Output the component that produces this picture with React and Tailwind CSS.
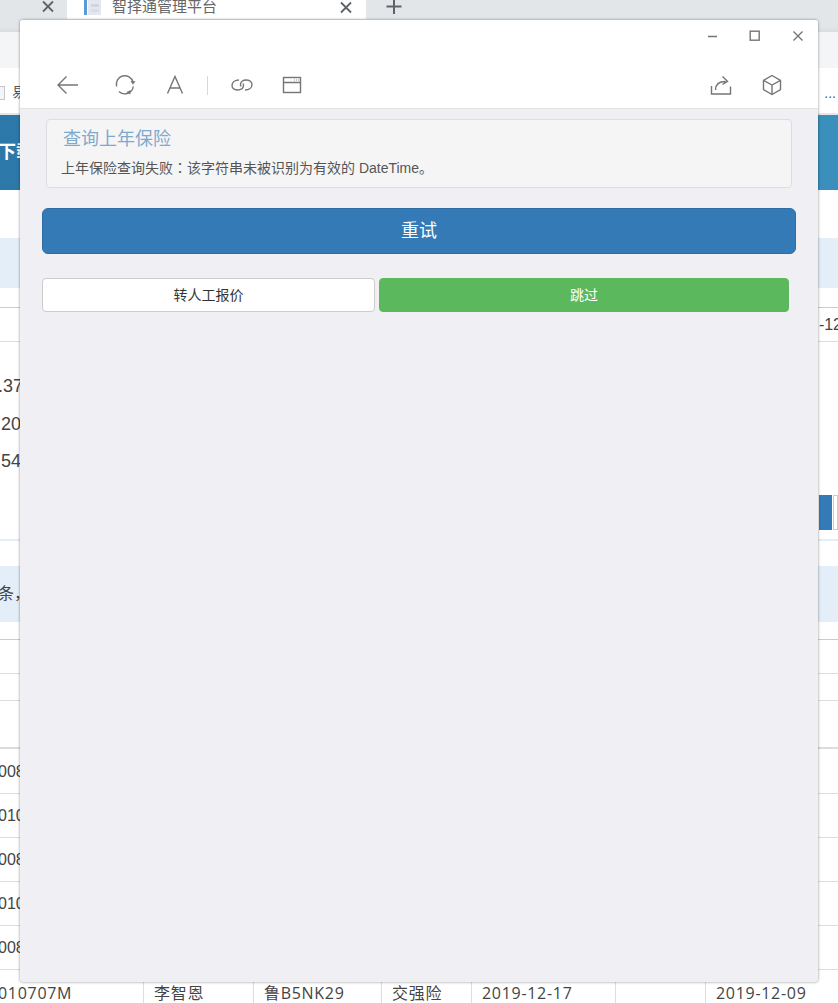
import React from "react";

const cjk = "font-['Liberation_Sans','Noto_Sans_CJK_SC',sans-serif]";
const tableFont = "font-['Open_Sans','Noto_Sans_CJK_SC',sans-serif]";
const strokeIcon = {
  fill: "none",
  stroke: "#757575",
  strokeWidth: 1.4,
};

const TableRow = ({ text, className = "h-11" }) => (
  <div className={`${className} flex items-center overflow-hidden border-b border-[#dddddd] bg-white pt-[1px] text-[16px] text-[#444444]`}>
    <span className="-ml-[2px]">{text}</span>
  </div>
);

const LastRow = () => (
  <div className={`${tableFont} grid h-[33px] grid-cols-[143px_110px_128px_90px_144px_90px_1fr] bg-white text-[16px] leading-[46px] tracking-[0.7px] text-[#444444]`}>
    <div className="-ml-[2px]">010707M</div>
    <div className="border-l border-[#dddddd] pl-[10px]">李智恩</div>
    <div className="border-l border-[#dddddd] pl-[10px]">鲁B5NK29</div>
    <div className="border-l border-[#dddddd] pl-[10px]">交强险</div>
    <div className="border-l border-[#dddddd] pl-[10px]">2019-12-17</div>
    <div className="border-l border-[#dddddd]"></div>
    <div className="border-l border-[#dddddd] pl-[10px]">2019-12-09</div>
  </div>
);

const Background = () => (
  <div className="flex h-[1003px] w-[838px] flex-col overflow-hidden bg-white">
    {/* browser tabs */}
    <div className="flex h-[32px] items-start bg-[#e3e6e9] shadow-[inset_0_-6px_6px_-6px_#cfd2d5]">
      <svg width="14" height="14" viewBox="0 0 14 14" className="ml-[41px]" fill="none" stroke="#5f6368" strokeWidth="1.8">
        <path d="M2 1.500 12 11.500M12 1.500 2 11.500" />
      </svg>
      <div className="ml-[12px] flex h-[19px] w-[299px] items-center bg-white text-[15px] text-[#666666]">
        <svg width="20" height="20" viewBox="0 0 20 20" className="ml-[16px] -mt-[2px]">
          <rect x="1" y="0" width="3" height="16" fill="#5b9bd5" />
          <rect x="5" y="0" width="13" height="16" fill="#e4e8ee" />
          <rect x="8" y="5" width="8" height="3" fill="#cfd6df" />
          <rect x="8" y="10" width="8" height="3" fill="#d9dee5" />
        </svg>
        <span className="ml-[9px] -mt-[5px]">智择通管理平台</span>
        <svg width="14" height="14" viewBox="0 0 14 14" className="ml-auto mr-[13px] -mt-[4px]" fill="none" stroke="#5f6368" strokeWidth="1.8">
          <path d="M2 1.500 12 11.500M12 1.500 2 11.500" />
        </svg>
      </div>
      <svg width="16" height="16" viewBox="0 0 16 16" className="ml-[20px] -mt-[1px]" fill="none" stroke="#5f6368" strokeWidth="2">
        <path d="M8 0v15M0.500 7.500h15" />
      </svg>
    </div>
    <div className="h-[36px] bg-[#f4f5f6]"></div>
    {/* bookmarks */}
    <div className="flex h-[45px] items-center bg-white text-[14px] text-[#555555]">
      <div className="mt-[4px] h-[14px] w-[5px] border border-l-0 border-[#c4c8cc] bg-[#f4f5f6]"></div>
      <span className="ml-[7px] mt-[3px]">易</span>
      <span className="ml-auto mr-[2px] mt-[6px] text-[#3a5fa8]">...</span>
    </div>
    <div className="h-[2px] bg-[#e6e6e6]"></div>
    {/* page header */}
    <div className="flex h-[75px] items-center bg-gradient-to-r from-[#2c78a8] to-[#3a8fbc] text-[18px] font-bold text-white">
      <span className="-ml-[2px]">下载</span>
    </div>
    <div className="h-[48px]"></div>
    <div className="h-[50px] bg-[#e3eef8]"></div>
    <div className="h-[20px] border-b border-[#cccccc]"></div>
    <div className="flex h-[34px] items-center justify-end border-b border-[#dddddd] text-[16px] text-[#444444]">
      <span className="-mr-[4px]">-12</span>
    </div>
    <div className="flex h-[199px] flex-col border-b-2 border-[#e3eef8] pt-[26px] text-[18px] leading-[37.5px] text-[#444444]">
      <span className="-ml-[2px]">.37</span>
      <span className="ml-[1px]">20</span>
      <span className="ml-[1px]">54</span>
      <div className="ml-auto mt-[14px] flex">
        <div className="h-[35px] w-[13px] bg-[#337ab7]"></div>
        <div className="ml-[1px] h-[35px] w-[5px] border border-[#cccccc] bg-white"></div>
      </div>
    </div>
    <div className="h-[25px]"></div>
    <div className="flex h-[56px] items-center bg-[#e3eef8] text-[16px] text-[#444444]">
      <span className="-ml-[2px]">条，</span>
    </div>
    <div className="h-[18px] border-b border-[#cccccc]"></div>
    <div className="h-[34px] border-b border-[#dddddd]"></div>
    <div className="h-[27px] border-b border-[#dddddd]"></div>
    <div className="h-[48px] border-b-2 border-[#dddddd]"></div>
    <TableRow text="008" className="h-[45px]" />
    <TableRow text="010" />
    <TableRow text="008" />
    <TableRow text="010" />
    <TableRow text="008" />
    <LastRow />
  </div>
);

const Toolbar = () => (
  <div className="h-[89px] shrink-0 border-b border-[#e2e2e2] bg-white">
    <div className="flex h-[32px] items-center justify-end">
      <svg width="12" height="12" viewBox="0 0 12 12" {...strokeIcon}>
        <path d="M1 6.500h9" />
      </svg>
      <svg width="12" height="12" viewBox="0 0 12 12" className="ml-[30px]" {...strokeIcon}>
        <rect x="1.200" y="1.200" width="9" height="9" />
      </svg>
      <svg width="12" height="12" viewBox="0 0 12 12" className="ml-[31px] mr-[14px]" {...strokeIcon}>
        <path d="M1.500 1.500 10.500 10.500M10.500 1.500 1.500 10.500" />
      </svg>
    </div>
    <div className="mt-[21px] flex h-[24px] items-center pl-[36px] pr-[36px]">
      <svg width="24" height="24" viewBox="0 0 24 24" {...strokeIcon}>
        <path d="M22 12H2.500M10.500 3.500 2 12l8.500 8.500" />
      </svg>
      <svg width="24" height="24" viewBox="0 0 24 24" className="ml-[33px]" {...strokeIcon}>
        <path d="M3.600 13.500A8.500 8.500 0 1 1 20 9" />
        <path d="M20.300 13.500A8.500 8.500 0 0 1 6 18.400" />
        <path d="M18 8.500h4l-2 2.800z" fill="#757575" strokeWidth="0.600" />
        <path d="M17.500 17.500l-.4 3.500-3.300-1.800z" fill="#757575" strokeWidth="0.600" />
      </svg>
      <svg width="20" height="24" viewBox="0 0 20 24" className="ml-[28px]" {...strokeIcon}>
        <path d="M2.500 20.500 10 3.500l7.500 17M5 15h10" />
      </svg>
      <div className="ml-[22px] h-[19px] w-[1px] bg-[#d8d8d8]"></div>
      <svg width="24" height="24" viewBox="0 0 24 24" className="ml-[22px]" {...strokeIcon}>
        <path d="M9 7C5 7 2 9 2 12.500 2 15.500 5 17 8 17c3 0 5.500-2 5.500-4.500 0-.8-.2-1.500-.5-2" />
        <path d="M15 17c4 0 7-2 7-5.500C22 8.500 19 7 16 7c-3 0-5.500 2-5.500 4.500 0 .8.2 1.500.5 2" />
      </svg>
      <svg width="20" height="20" viewBox="0 0 20 20" className="ml-[28px]" {...strokeIcon}>
        <rect x="1.500" y="2.500" width="17" height="15" />
        <path d="M1.500 7.500h17" />
        <path d="M12 5h.8M14 5h.8M16 5h.8" strokeWidth="1" />
      </svg>
      <svg width="24" height="24" viewBox="0 0 24 24" className="ml-auto" {...strokeIcon}>
        <path d="M2.500 13v8h19v-7.500" />
        <path d="M6.500 17c0-6 4-8.500 10-8.500M13.500 3.500l5 4.800-5 3.200" />
      </svg>
      <svg width="24" height="24" viewBox="0 0 24 24" className="ml-[27px] -mr-[2px]" {...strokeIcon}>
        <path d="M12 2.500 20.500 7.300v9.400L12 21.500l-8.500-4.800V7.300z" />
        <path d="M3.500 7.300 12 12l8.500-4.700M12 12v9.500" />
      </svg>
    </div>
  </div>
);

const DialogWindow = () => (
  <div className="absolute left-[20px] top-[20px] flex h-[962px] w-[798px] flex-col overflow-hidden rounded-[3px] bg-[#efeff4] shadow-[0_0_3px_rgba(0,0,0,0.45)]">
    <Toolbar />
    <div className="px-[22px] pt-[10px]">
      <div className="ml-[4px] h-[69px] w-[746px] rounded-[4px] border border-[#dddddd] bg-[#f5f5f5] pl-[14px] pt-[6px]">
        <div className="pl-[2px] text-[18px] leading-[26px] text-[#7fa9cc]">查询上年保险</div>
        <div className="mt-[5px] text-[14px] leading-[20px] text-[#555555]">
          上年保险查询失败<span className="font-['Noto_Sans_CJK_TC',sans-serif]">：</span>该字符串未被识别为有效的 DateTime。
        </div>
      </div>
      <button className="mt-[20px] flex h-[46px] w-[754px] items-center justify-center rounded-[6px] border border-[#2e6da4] bg-[#337ab7] text-[18px] text-white">
        重试
      </button>
      <div className="mt-[24px] flex gap-[4px]">
        <button className="h-[34px] w-[333px] rounded-[4px] border border-[#cccccc] bg-white text-[14px] text-[#333333]">
          转人工报价
        </button>
        <button className="h-[34px] w-[410px] rounded-[4px] border border-[#5cb85c] bg-[#5cb85c] text-[14px] text-white">
          跳过
        </button>
      </div>
    </div>
  </div>
);

export default function App() {
  return (
    <div className={`${cjk} relative h-[1003px] w-[838px] overflow-hidden`}>
      <Background />
      <DialogWindow />
    </div>
  );
}
